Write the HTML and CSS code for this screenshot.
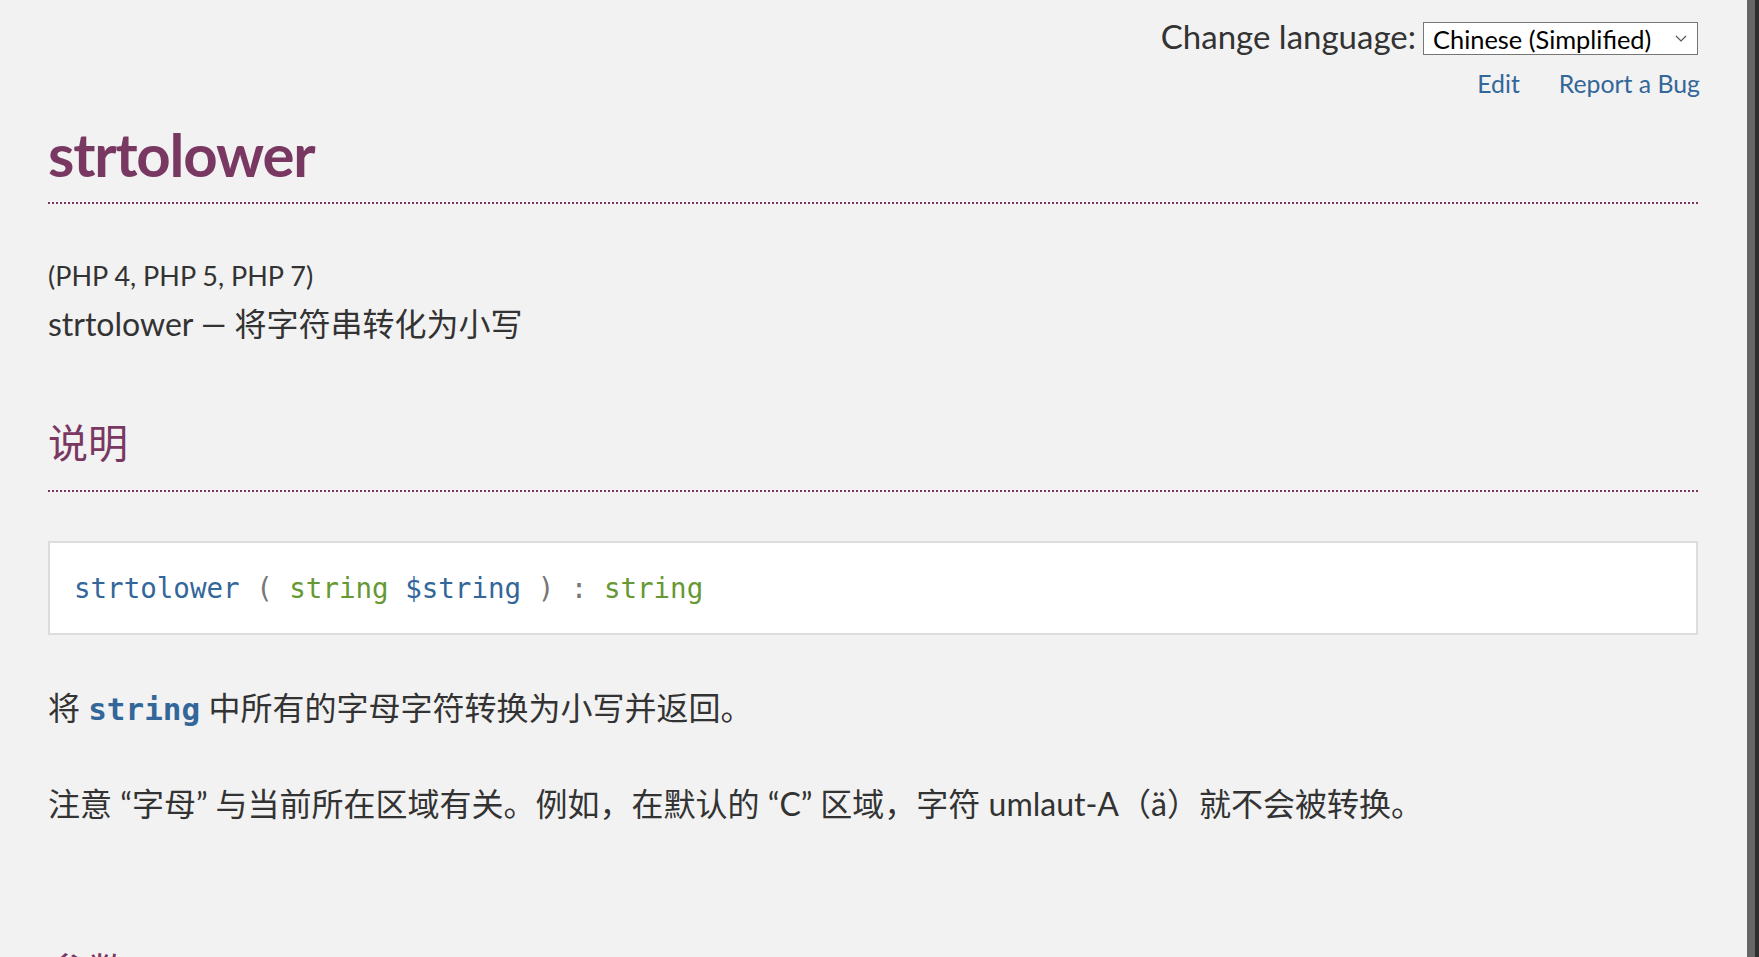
FILE: index.html
```html
<!DOCTYPE html>
<html lang="zh-CN">
<head>
<meta charset="utf-8">
<title>PHP: strtolower - Manual</title>
<link rel="stylesheet" href="styles.css">
</head>
<body>
<div class="page">
  <main class="content">
    <div class="lang-bar">
      <span class="lang-label">Change language:</span>
      <div class="select">
        <span class="select-text">Chinese (Simplified)</span>
        <svg class="chevron" width="12" height="7" viewBox="0 0 12 7"><path d="M1 1 L6 6 L11 1" fill="none" stroke="#555" stroke-width="1.2"/></svg>
      </div>
    </div>
    <div class="edit-links">
      <a href="#" class="link">Edit</a>
      <a href="#" class="link">Report a Bug</a>
    </div>
    <h1 class="refname">strtolower</h1>
    <p class="verinfo">(PHP 4, PHP 5, PHP 7)</p>
    <p class="refpurpose">strtolower — 将字符串转化为小写</p>
    <h2 class="title">说明</h2>
    <div class="methodsynopsis"><span class="methodname">strtolower</span> <span class="punct">(</span> <span class="type">string</span> <span class="var">$string</span> <span class="punct">)</span> <span class="punct">:</span> <span class="type">string</span></div>
    <p class="para">将 <code class="parameter">string</code> 中所有的字母字符转换为小写并返回。</p>
    <p class="para">注意 “字母” 与当前所在区域有关。例如，在默认的 “C” 区域，字符 umlaut-A（ä）就不会被转换。</p>
    <h2 class="title title-next">参数</h2>
  </main>
  <div class="edge-light"></div>
  <div class="edge-dark"></div>
</div>
</body>
</html>
```

FILE: styles.css
```css
html, body {
  margin: 0;
  padding: 0;
}

body {
  background: #2e2e2e;
  font-family: "Lato", "Noto Sans CJK SC", sans-serif;
  color: #333;
  overflow: hidden;
}

.page {
  display: flex;
  height: 957px;
  overflow: hidden;
}

.content {
  flex: 1;
  background: #f2f2f2;
  padding: 0 49px 0 48px;
  overflow: hidden;
}

.edge-light {
  width: 8px;
  background: #666;
}

.edge-dark {
  width: 4px;
  background: #2e2e2e;
}

.lang-bar {
  display: flex;
  justify-content: flex-end;
  align-items: flex-start;
  gap: 7px;
  padding-top: 22px;
}

.lang-label {
  font-size: 33px;
  line-height: 28px;
  color: #333;
}

.select {
  box-sizing: border-box;
  width: 275px;
  height: 33px;
  border: 1px solid #767676;
  background: #fff;
  display: flex;
  align-items: center;
  justify-content: space-between;
  padding: 0 10px 0 9px;
  font-family: "Lato", sans-serif;
  font-size: 25.4px;
  color: #000;
}

.chevron {
  display: block;
}

.edit-links {
  display: flex;
  justify-content: flex-end;
  gap: 39px;
  margin: 10px -2px 0 0;
}

.link {
  font-size: 24.8px;
  line-height: 38px;
  color: #369;
  text-decoration: none;
}

.refname {
  margin: 15px 0 0;
  padding-bottom: 12px;
  border-bottom: 2px dotted #793862;
  font-size: 60px;
  line-height: 72px;
  letter-spacing: -1.2px;
  font-weight: 700;
  color: #793862;
}

.verinfo {
  margin: 51px 0 0;
  font-size: 27px;
  line-height: 42px;
}

.refpurpose {
  margin: 3px 0 0;
  font-size: 32px;
  line-height: 48px;
}

.title {
  margin: 71px 0 0;
  padding-bottom: 23px;
  border-bottom: 2px dotted #793862;
  font-size: 40px;
  line-height: 48px;
  font-weight: 400;
  color: #793862;
}

.title-next {
  margin-top: 120px;
}

.methodsynopsis {
  margin-top: 49px;
  background: #fff;
  border: 2px solid #dcdcdc;
  padding: 24px 24px;
  font-family: "DejaVu Sans Mono", monospace;
  font-size: 27.5px;
  line-height: 42px;
  color: #777;
}

.methodname,
.var {
  color: #369;
}

.type {
  color: #693;
}

.punct {
  color: #777;
}

.para {
  margin: 49px 0 0;
  font-size: 32px;
  line-height: 48px;
}

.para + .para {
  margin-top: 47px;
}

.parameter {
  font-family: "DejaVu Sans Mono", monospace;
  font-weight: 700;
  font-size: 31px;
  color: #369;
}
```
